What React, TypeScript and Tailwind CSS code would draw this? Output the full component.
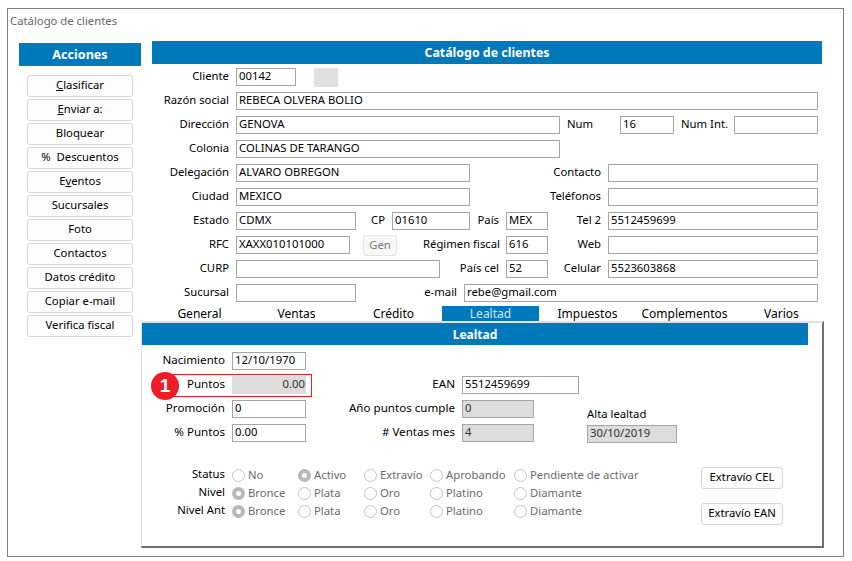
import React from "react";

function Box({ w, v = "", gray = false, bare = false, right = false, cls = "" }: { w: number; v?: string; gray?: boolean; bare?: boolean; right?: boolean; cls?: string }) {
  return (
    <div
      style={{ width: w }}
      className={`h-[18px] shrink-0 flex items-center leading-none whitespace-nowrap text-[11.3px] border pb-[2px] ${right ? "justify-end pl-[2px] pr-0" : "px-[2px]"} ${bare ? "border-[#dcdcdc]" : "border-[#a5a5a5]"} ${gray ? "bg-[#dcdcdc] text-[#333]" : "bg-white"} ${cls}`}
    >
      {v}
    </div>
  );
}

function Lab({ w, t, cls = "" }: { w: number; t: string; cls?: string }) {
  return (
    <div style={{ width: w }} className={`shrink-0 text-right pr-[7px] pb-[2px] whitespace-nowrap ${cls}`}>
      {t}
    </div>
  );
}

function Row({ children }: { children: React.ReactNode }) {
  return <div className="flex items-center h-[24px]">{children}</div>;
}

const btnCls = "h-[22px] pb-[2px] flex items-center justify-center rounded-[3px] border border-[#d4d4d4] bg-[#fdfdfd] whitespace-nowrap";

function Btn({ children }: { children: React.ReactNode }) {
  return <div className={`${btnCls} mb-[2px] mx-[8px]`}>{children}</div>;
}

function Radio({ t, on = false, w }: { t: string; on?: boolean; w: number }) {
  return (
    <div style={{ width: w }} className="flex items-center shrink-0 text-[#6b6b6b] whitespace-nowrap">
      <span className={`w-[13px] h-[13px] rounded-full bg-white shrink-0 mr-[3px] ${on ? "border-[4px] border-[#b8b8b8]" : "border border-[#c4c4c4]"}`} />
      {t}
    </div>
  );
}

function RadioRow({ label, items, on }: { label: string; items: string[]; on: number }) {
  const ws = [66, 66, 66, 84, 130];
  return (
    <div className="flex items-center h-[18px]">
      <Lab w={90} t={label} />
      {items.map((t, i) => (
        <Radio key={t + i} t={t} on={i === on} w={ws[i]} />
      ))}
    </div>
  );
}

const tabs = ["General", "Ventas", "Crédito", "Lealtad", "Impuestos", "Complementos", "Varios"];
const actions: React.ReactNode[] = [
  <><u>C</u>lasificar</>,
  <><u>E</u>nviar a:</>,
  "Bloquear",
  <>%&nbsp; Descuentos</>,
  <>E<u>v</u>entos</>,
  "Sucursales",
  "Foto",
  "Contactos",
  "Datos crédito",
  "Copiar e-mail",
  "Verifica fiscal",
];

export default function App() {
  return (
    <div className="w-[852px] h-[561px] bg-white pt-[8px] pl-[7px] text-[11.3px] text-black overflow-hidden" style={{ fontFamily: '"Noto Sans", sans-serif' }}>
      <div className="w-[837px] h-[549px] border border-[#7d7d7d] flex flex-col">
        <div className="h-[24px] pl-[2px] pt-[3px] text-[#666] leading-[18px]">Catálogo de clientes</div>
        <div className="flex pl-[11px]">
          <div className="w-[122px] shrink-0 mr-[11px] pt-[10px]">
            <div className="h-[23px] pt-[1px] bg-[#0079bb] text-white font-bold text-[12.6px] flex items-center justify-center mb-[9px]">Acciones</div>
            {actions.map((a, i) => (
              <Btn key={i}>{a}</Btn>
            ))}
          </div>
          <div className="flex-1 min-w-0 pt-[8px]">
            <div className="w-[670px] h-[23px] pt-[2px] bg-[#0079bb] text-white font-bold text-[12.4px] flex items-center justify-center mb-[1px]">Catálogo de clientes</div>
            <Row>
              <Lab w={84} t="Cliente" />
              <Box w={60} v="00142" />
              <div className="w-[24px] h-[19px] ml-[18px] bg-[#e0e0e0]" />
            </Row>
            <Row>
              <Lab w={84} t="Razón social" />
              <Box w={582} v="REBECA OLVERA BOLIO" />
            </Row>
            <Row>
              <Lab w={84} t="Dirección" />
              <Box w={324} v="GENOVA" />
              <div className="w-[60px] pl-[7px] pb-[2px]">Num</div>
              <Box w={54} v="16" />
              <div className="w-[60px] pl-[7px] pb-[2px] whitespace-nowrap">Num Int.</div>
              <Box w={84} />
            </Row>
            <Row>
              <Lab w={84} t="Colonia" />
              <Box w={324} v="COLINAS DE TARANGO" />
            </Row>
            <Row>
              <Lab w={84} t="Delegación" />
              <Box w={234} v="ALVARO OBREGON" />
              <Lab w={138} t="Contacto" />
              <Box w={210} />
            </Row>
            <Row>
              <Lab w={84} t="Ciudad" />
              <Box w={234} v="MEXICO" />
              <Lab w={138} t="Teléfonos" />
              <Box w={210} />
            </Row>
            <Row>
              <Lab w={84} t="Estado" />
              <Box w={120} v="CDMX" />
              <Lab w={36} t="CP" />
              <Box w={78} v="01610" />
              <Lab w={36} t="País" />
              <Box w={42} v="MEX" />
              <Lab w={60} t="Tel 2" />
              <Box w={210} v="5512459699" />
            </Row>
            <Row>
              <Lab w={84} t="RFC" />
              <Box w={114} v="XAXX010101000" />
              <div className="w-[34px] h-[21px] ml-[13px] mr-[26px] flex items-center justify-center rounded-[3px] border border-[#e4e4e4] bg-[#f8f8f8] text-[#777]">Gen</div>
              <div className="w-[83px] pr-[7px] pb-[2px] text-right whitespace-nowrap">Régimen fiscal</div>
              <Box w={42} v="616" />
              <Lab w={60} t="Web" />
              <Box w={210} />
            </Row>
            <Row>
              <Lab w={84} t="CURP" />
              <Box w={204} />
              <Lab w={66} t="País cel" />
              <Box w={42} v="52" />
              <Lab w={60} t="Celular" />
              <Box w={210} v="5523603868" />
            </Row>
            <Row>
              <Lab w={84} t="Sucursal" />
              <Box w={120} />
              <Lab w={108} t="e-mail" />
              <Box w={354} v="rebe@gmail.com" cls="border-[#777]" />
            </Row>
            <div className="flex w-[679px] h-[15px] mt-[1px] -ml-[1px] leading-[15px] text-[12px]">
              {tabs.map((t) => (
                <div key={t} className={`w-[97px] text-center ${t === "Lealtad" ? "bg-[#0079bb] text-[#cfe6f3]" : ""}`}>
                  {t}
                </div>
              ))}
            </div>
            <div className="-ml-[11px] w-[683px] h-[227px] border-l border-t-2 border-r-2 border-b-2 border-l-[#e0e0e0] border-t-[#e0e0e0] border-r-[#6e6e6e] border-b-[#6e6e6e] bg-white">
              <div className="w-[666px] h-[22px] pt-[1px] bg-[#0079bb] text-white font-bold text-[12px] flex items-center justify-center">Lealtad</div>
              <div className="flex mt-[4px] text-[11.6px]">
                <div className="w-[173px] shrink-0">
                  <Row>
                    <Lab w={90} t="Nacimiento" />
                    <Box w={74} v="12/10/1970" />
                  </Row>
                  <div className="relative">
                    <Row>
                      <Lab w={90} t="Puntos" />
                      <Box w={74} v="0.00" gray bare right />
                    </Row>
                    <div className="absolute left-[28px] top-[1px] w-[142px] h-[23px] border border-[#e8202a]" />
                    <div className="absolute left-[9px] top-[-1px] w-[28px] h-[28px] rounded-full bg-[#ee1c25] text-white font-bold text-[19px] flex items-center justify-center" style={{ fontFamily: '"Liberation Sans", sans-serif' }}>1</div>
                  </div>
                  <Row>
                    <Lab w={90} t="Promoción" />
                    <Box w={74} v="0" />
                  </Row>
                  <Row>
                    <Lab w={90} t="% Puntos" />
                    <Box w={74} v="0.00" />
                  </Row>
                </div>
                <div className="w-[272px] shrink-0 pt-[24px]">
                  <Row>
                    <Lab w={147} t="EAN" />
                    <Box w={117} v="5512459699" />
                  </Row>
                  <Row>
                    <Lab w={147} t="Año puntos cumple" />
                    <Box w={72} v="0" gray />
                  </Row>
                  <Row>
                    <Lab w={147} t="# Ventas mes" />
                    <Box w={72} v="4" gray />
                  </Row>
                </div>
                <div className="pt-[55px] text-[11.3px]">
                  <div className="h-[18px] pt-[1px] leading-[18px] whitespace-nowrap">Alta lealtad</div>
                  <div className="h-[24px] flex items-center"><Box w={90} v="30/10/2019" gray /></div>
                </div>
              </div>
              <div className="flex mt-[20px]">
                <div className="w-[559px] shrink-0">
                  <RadioRow label="Status" items={["No", "Activo", "Extravío", "Aprobando", "Pendiente de activar"]} on={1} />
                  <RadioRow label="Nivel" items={["Bronce", "Plata", "Oro", "Platino", "Diamante"]} on={0} />
                  <RadioRow label="Nivel Ant" items={["Bronce", "Plata", "Oro", "Platino", "Diamante"]} on={0} />
                </div>
                <div className="w-[82px] shrink-0 mt-[1px]">
                  <div className={`${btnCls} mb-[14px]`}>Extravío CEL</div>
                  <div className={btnCls}>Extravío EAN</div>
                </div>
              </div>
            </div>
          </div>
        </div>
      </div>
    </div>
  );
}
